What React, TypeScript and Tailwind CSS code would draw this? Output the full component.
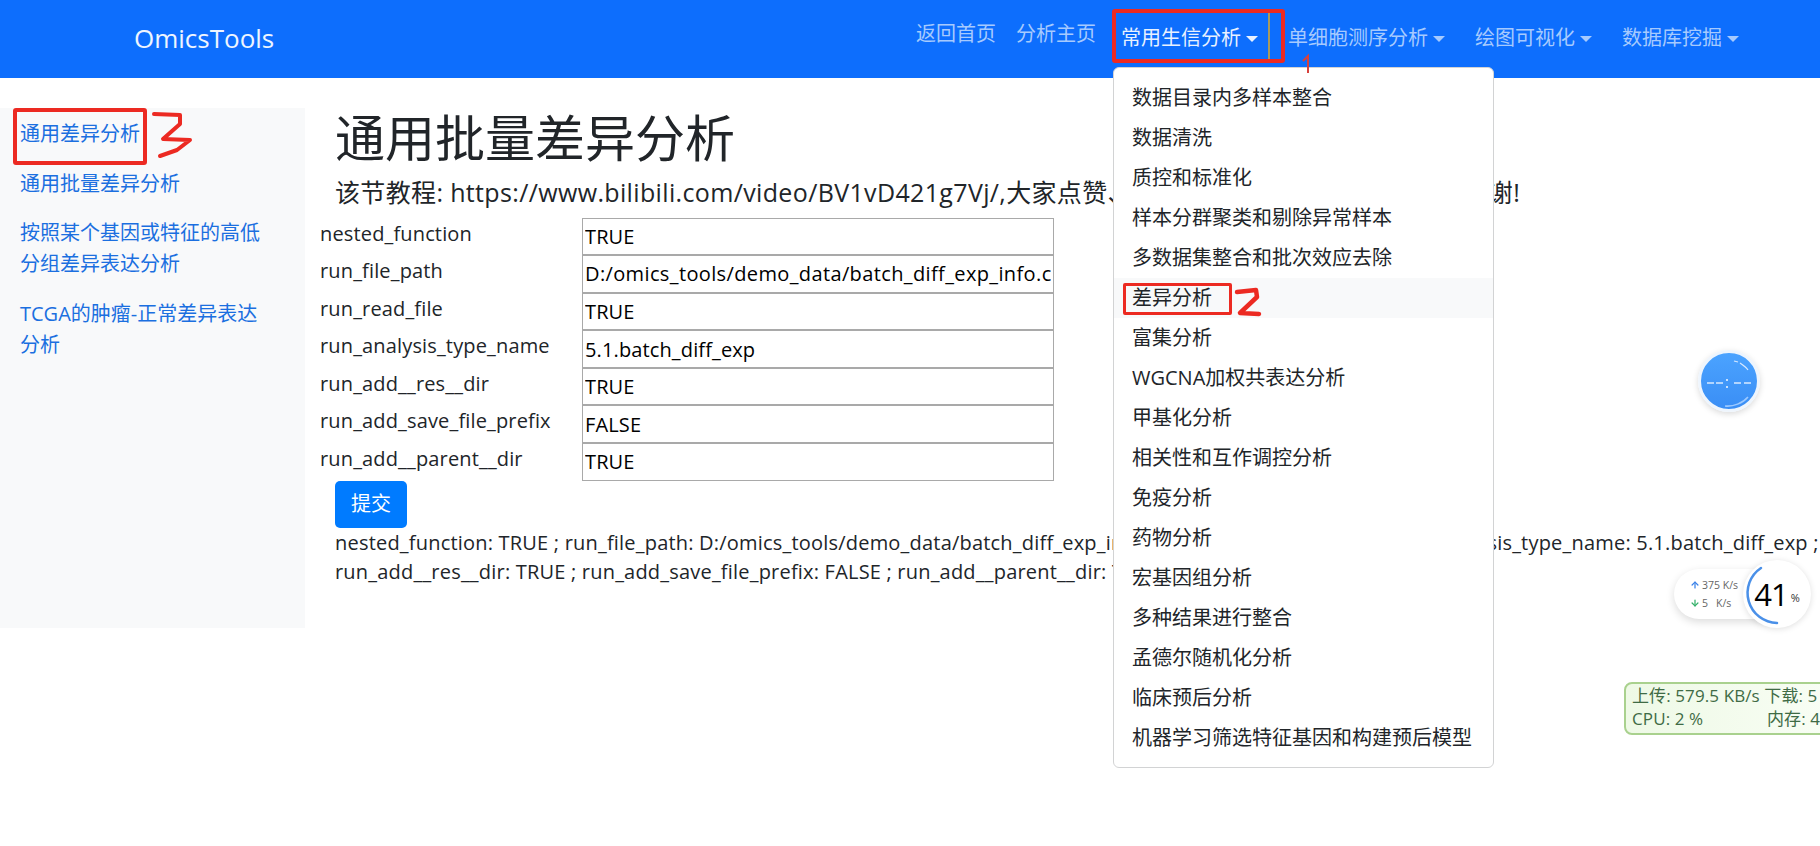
import React from 'react';
import { ArrowUp, ArrowDown } from 'lucide-react';

const fields = [
  ['nested_function', 'TRUE'],
  ['run_file_path', 'D:/omics_tools/demo_data/batch_diff_exp_info.csv'],
  ['run_read_file', 'TRUE'],
  ['run_analysis_type_name', '5.1.batch_diff_exp'],
  ['run_add__res__dir', 'TRUE'],
  ['run_add_save_file_prefix', 'FALSE'],
  ['run_add__parent__dir', 'TRUE'],
];

const menuItems = [
  '数据目录内多样本整合',
  '数据清洗',
  '质控和标准化',
  '样本分群聚类和剔除异常样本',
  '多数据集整合和批次效应去除',
  '差异分析',
  '富集分析',
  'WGCNA加权共表达分析',
  '甲基化分析',
  '相关性和互作调控分析',
  '免疫分析',
  '药物分析',
  '宏基因组分析',
  '多种结果进行整合',
  '孟德尔随机化分析',
  '临床预后分析',
  '机器学习筛选特征基因和构建预后模型',
];

const sideLinks = ['通用差异分析', '通用批量差异分析', '按照某个基因或特征的高低分组差异表达分析', 'TCGA的肿瘤-正常差异表达分析'];

const Caret = () => (
  <span className="inline-block w-0 h-0 ml-[5px] align-[3px] border-x-[6px] border-x-transparent border-t-[6px] border-t-current" />
);

const NavLink = ({ text, active, caret, className }: { text: string; active?: boolean; caret?: boolean; className?: string }) => (
  <span className={`px-[10px] whitespace-nowrap ${active ? 'text-[#e8f1ff]' : 'text-[#a6cafe]'} ${className ?? ''}`}>
    {text}
    {caret && <Caret />}
  </span>
);

export default function App() {
  return (
    <div className="relative w-[1820px] h-[846px] overflow-hidden bg-white text-[20px] leading-[30px] text-[#212529] font-['Open_Sans','Noto_Sans_CJK_SC',sans-serif]">
      {/* navbar */}
      <nav className="h-[78px] bg-[#0d6efd] flex items-center pl-[134px] pr-[71px] pb-[2px]">
        <span className="text-[26px] font-medium text-[#eef5ff] -mt-[1px]">OmicsTools</span>
        <div className="ml-auto flex items-center">
          <NavLink text="返回首页" className="-mt-[8px]" />
          <NavLink text="分析主页" className="-mt-[8px]" />
          <NavLink text="常用生信分析" active caret className="ml-[5px]" />
          <NavLink text="单细胞测序分析" caret className="ml-[10px]" />
          <NavLink text="绘图可视化" caret className="ml-[10px]" />
          <NavLink text="数据库挖掘" caret className="ml-[10px]" />
        </div>
      </nav>

      <div className="flex items-start pt-[30px]">
        {/* sidebar */}
        <aside className="w-[305px] h-[520px] shrink-0 bg-[#f8f9fa] pl-[20px] pr-[30px] pt-[10px] text-[#1b6fe0]">
          {sideLinks.map((s) => (
            <p key={s} className="mb-[18.5px] leading-[31px]">{s}</p>
          ))}
        </aside>

        {/* main content */}
        <main className="flex-1 min-w-0 pl-[30px]">
          <h1 className="text-[50px] leading-[60px] whitespace-nowrap">通用批量差异分析</h1>
          <p className="text-[25px] leading-[30px] mt-[8.5px] whitespace-nowrap tracking-[0.35px]">
            该节教程: https://www.bilibili.com/video/BV1vD421g7Vj/,大家点赞、收藏、投币、转发和关注下，感谢!
          </p>
          <div className="-ml-[15px] mt-[11px]">
            {fields.map(([label, value]) => (
              <div key={label} className="flex h-[37.6px]">
                <label className="w-[262px] shrink-0 mt-[1px] tracking-[0.15px]">{label}</label>
                <input
                  readOnly
                  value={value}
                  className={`w-[472px] h-[37.6px] px-[2px] border border-[#a9a9a9] text-black outline-none ${value.startsWith('D:') ? 'tracking-[0.37px]' : 'tracking-[0.13px]'}`}
                />
              </div>
            ))}
          </div>
          <button className="block w-[72px] h-[47px] rounded-[5px] bg-[#007bff] text-white text-center">提交</button>
          <div className="leading-[29px] tracking-[0.2px]">
            nested_function: TRUE ; run_file_path: D:/omics_tools/demo_data/batch_diff_exp_info.csv ; run_read_file: TRUE ; run_analysis_type_name: 5.1.batch_diff_exp ; run_add__res__dir: TRUE ; run_add_save_file_prefix: FALSE ; run_add__parent__dir: TRUE
          </div>
        </main>
      </div>

      {/* dropdown menu */}
      <div className="absolute left-[1113px] top-[67px] w-[381px] h-[701px] bg-white border border-[#d2d3d4] rounded-[6px] pt-[10px] text-[#212529]">
        {menuItems.map((m) => (
          <div key={m} className={`h-[40px] pl-[18px] leading-[40px] whitespace-nowrap ${m === '差异分析' ? 'bg-[#f8f9fa]' : ''}`}>{m}</div>
        ))}
      </div>

      {/* red annotations */}
      <div className="absolute left-[1112px] top-[9px] w-[173px] h-[54px] border-[4px] border-[#ec2a22] rounded-[3px]" />
      <div className="absolute left-[1268px] top-[13px] w-[2px] h-[46px] bg-[#a89a5c]" />
      <div className="absolute left-[1123px] top-[283px] w-[109px] h-[32px] border-[3px] border-[#ec2a22] rounded-[2px]" />
      <div className="absolute left-[13px] top-[108px] w-[134px] h-[57px] border-[4px] border-[#ec2a22] rounded-[3px]" />
      <svg className="absolute left-[1295px] top-[52px]" width="24" height="24" viewBox="0 0 24 24" fill="none">
        <path d="M8 9 L13 4 V21" stroke="#d8413c" strokeWidth="2" />
      </svg>
      <svg className="absolute left-[1234px] top-[284px]" width="30" height="36" viewBox="0 0 30 36" fill="none">
        <path d="M3 8 L22 6 L23 13 L6 29 L25 30" stroke="#ec2a22" strokeWidth="4.5" strokeLinecap="round" strokeLinejoin="round" />
      </svg>
      <svg className="absolute left-[150px] top-[108px]" width="46" height="54" viewBox="0 0 46 54" fill="none">
        <path d="M4 6 L30 7 L30 16 L13 31 L40 32 L27 42 L10 48" stroke="#ec2a22" strokeWidth="4" strokeLinecap="round" strokeLinejoin="round" />
      </svg>

      {/* floating timer ball */}
      <div className="absolute left-[1698px] top-[350px] w-[62px] h-[62px] rounded-full border-[3px] border-[#eef5fd] bg-gradient-to-b from-[#4ba3ff] to-[#3a8ef5] shadow-[0_2px_6px_rgba(0,0,0,0.15)] flex items-center justify-center">
        <svg width="56" height="56" viewBox="0 0 56 56" fill="none" stroke="#d7e9ff">
          <path d="M33 8 L37 9 M39 10 C42 12 45 14 47 17" strokeWidth="1.2" />
          <path d="M6 30 H13 M15 30 H22 M33 30 H40 M43 30 H50" strokeWidth="1.6" />
          <path d="M26 26 V28 M26 33 V35" strokeWidth="1.8" />
          <path d="M24 53 C32 54 42 50 47 44" stroke="#9cc9ff" strokeWidth="1.6" />
        </svg>
      </div>

      {/* network speed widget */}
      <div className="absolute left-[1674px] top-[569px] w-[110px] h-[50px] rounded-[25px] bg-white shadow-[0_3px_8px_rgba(0,0,0,0.14)] pl-[16px] pt-[7px] text-[10.5px] leading-[18px] text-[#666]">
        <div className="flex items-center gap-[2px]">
          <ArrowUp size={10} strokeWidth={3} className="text-[#3b82e8]" />375 K/s
        </div>
        <div className="flex items-center gap-[2px]">
          <ArrowDown size={10} strokeWidth={3} className="text-[#35b06a]" />5<span className="ml-[6px]">K/s</span>
        </div>
      </div>
      <div className="absolute left-[1743px] top-[560px] w-[68px] h-[68px] rounded-full bg-white shadow-[0_1px_6px_rgba(0,0,0,0.13)] flex items-center justify-center">
        <svg className="absolute inset-0" width="68" height="68" viewBox="0 0 68 68" fill="none">
          <path d="M18 8 A30 30 0 0 0 34 63" stroke="#4a90e8" strokeWidth="2.5" strokeLinecap="round" />
        </svg>
        <span className="text-[31px] leading-none tracking-[-1px] text-black">41</span>
        <span className="text-[11px] mt-[7px] ml-[3px] text-[#333]">%</span>
      </div>

      {/* green monitor widget */}
      <div className="absolute left-[1624px] top-[682px] w-[260px] h-[53px] rounded-[8px] border-2 border-[#a9d18e] bg-gradient-to-r from-[#eef9e6] to-[#fbfff8] pl-[6px] text-[17px] leading-[23px] tracking-[0.1px] text-[#3f6b45]">
        <div className="whitespace-nowrap">上传: 579.5 KB/s 下载: 5</div>
        <div className="flex whitespace-nowrap"><span className="w-[135px]">CPU: 2 %</span><span>内存: 4</span></div>
      </div>
    </div>
  );
}
